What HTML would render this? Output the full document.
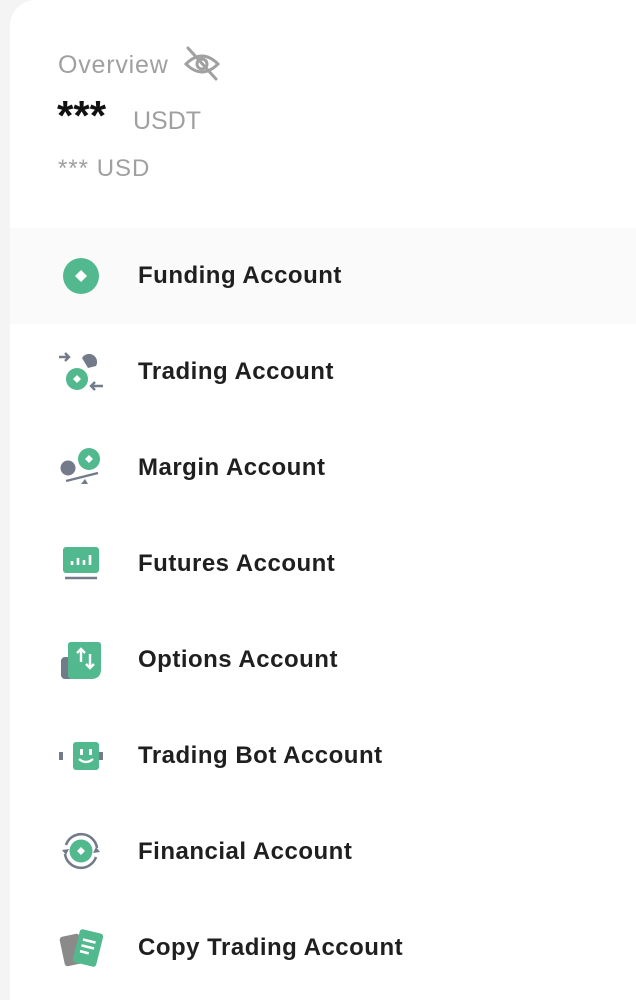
<!DOCTYPE html>
<html><head><meta charset="utf-8"><style>
html,body{margin:0;padding:0;width:636px;height:972px;overflow:hidden;background:#f4f4f4;font-family:"Liberation Sans",Roboto,sans-serif}
.card{position:absolute;left:10px;top:0;width:640px;height:1000px;background:#fff;border-top-left-radius:26px}
.t{position:absolute;white-space:nowrap}
.row{position:absolute;left:10px;width:626px;height:96px}
.row span{position:absolute;left:128px;top:34px;font-size:24px;color:#1f1f1f;font-weight:bold;letter-spacing:0.5px}
svg.i{position:absolute;left:60px;width:40px;height:40px;overflow:visible}
</style></head><body>
<div class="card"></div>
<div class="t" style="left:58px;top:51px;font-size:25px;color:#a0a0a0;letter-spacing:0.8px">Overview</div>
<svg style="position:absolute;left:183px;top:46px;overflow:visible" width="38" height="36" viewBox="0 0 38 36" fill="none" stroke="#a0a0a0" stroke-width="3" stroke-linecap="round"><path d="M3 18 Q19 2 35 18 Q19 34 3 18Z"/><circle cx="19" cy="18" r="5"/><path d="M5 2 L33 33"/></svg>
<div class="t" style="left:57px;top:92px;font-size:42px;font-weight:bold;color:#111">***</div>
<div class="t" style="left:133px;top:107px;font-size:25px;color:#a0a0a0">USDT</div>
<div class="t" style="left:58px;top:155px;font-size:24px;color:#a0a0a0;letter-spacing:1px">*** USD</div>

<div class="row" style="top:228px;background:#fafafa"><span>Funding Account</span></div>
<div class="row" style="top:324px"><span>Trading Account</span></div>
<div class="row" style="top:420px"><span>Margin Account</span></div>
<div class="row" style="top:516px"><span>Futures Account</span></div>
<div class="row" style="top:612px"><span>Options Account</span></div>
<div class="row" style="top:708px"><span>Trading Bot Account</span></div>
<div class="row" style="top:804px"><span>Financial Account</span></div>
<div class="row" style="top:900px"><span>Copy Trading Account</span></div>

<svg class="i" style="top:256px" viewBox="0 0 40 40"><circle cx="21" cy="20" r="18" fill="#52b88e"/><path d="M21 14 L27 20 L21 26 L15 20Z" fill="#fff"/></svg>
<svg class="i" style="top:352px" viewBox="0 0 40 40"><path d="M22 6 A8 8 0 0 1 36 14 L28 16Z" fill="#737b8a"/><circle cx="17" cy="27" r="11" fill="#52b88e"/><path d="M17 23 L21 27 L17 31 L13 27Z" fill="#fff"/><path d="M-1 5 H9 M5 1 L9 5 L5 9" stroke="#737b8a" stroke-width="2.4" fill="none"/><path d="M43 34 H31 M35 30 L31 34 L35 38" stroke="#737b8a" stroke-width="2.4" fill="none"/></svg>
<svg class="i" style="top:448px" viewBox="0 0 40 40"><circle cx="8" cy="20" r="7.5" fill="#737b8a"/><circle cx="29" cy="11" r="11" fill="#52b88e"/><path d="M29 7 L33 11 L29 15 L25 11Z" fill="#fff"/><path d="M6 33 L38 25" stroke="#737b8a" stroke-width="2.4"/><path d="M21 36 L25 31 L28 36Z" fill="#737b8a"/></svg>
<svg class="i" style="top:544px" viewBox="0 0 40 40"><rect x="3" y="3" width="36" height="26" rx="3" fill="#52b88e"/><path d="M12 21 V17 M18 21 V14 M24 21 V16 M30 21 V11" stroke="#fff" stroke-width="2.6"/><path d="M5 34 H37" stroke="#737b8a" stroke-width="2.4"/></svg>
<svg class="i" style="top:640px" viewBox="0 0 40 40"><rect x="1" y="17" width="14" height="22" rx="4" fill="#737b8a"/><path d="M11 2 Q8 2 8 5 V35 Q8 39 12 39 H31 Q41 39 41 29 V5 Q41 2 38 2 H11Z" fill="#52b88e"/><path d="M21 22 V9 M17 13 L21 9 L25 13 M30 14 V28 M26 24 L30 28 L34 24" stroke="#fff" stroke-width="2.4" fill="none"/></svg>
<svg class="i" style="top:736px" viewBox="0 0 40 40"><rect x="-1" y="16" width="4" height="8" fill="#737b8a"/><rect x="39" y="16" width="4" height="8" fill="#737b8a"/><rect x="13" y="6" width="26" height="28" rx="3" fill="#52b88e"/><rect x="20" y="13" width="3" height="6" fill="#fff"/><rect x="29" y="13" width="3" height="6" fill="#fff"/><path d="M19 23 Q26 29 33 23" stroke="#fff" stroke-width="2.4" fill="none"/></svg>
<svg class="i" style="top:831px" viewBox="0 0 40 40"><path d="M6 14 A16 16 0 0 1 37 17" stroke="#737b8a" stroke-width="2.6" fill="none"/><path d="M36 26 A16 16 0 0 1 5 23" stroke="#737b8a" stroke-width="2.6" fill="none"/><path d="M2 19 L6 24 L9 18Z M40 21 L36 16 L33 22Z" fill="#737b8a"/><circle cx="21" cy="20" r="11.5" fill="#52b88e"/><path d="M21 16 L25 20 L21 24 L17 20Z" fill="#fff"/></svg>
<svg class="i" style="top:928px" viewBox="0 0 40 40"><rect x="2" y="7" width="20" height="30" rx="3" fill="#8a8a8a" transform="rotate(-12 12 22)"/><g transform="rotate(14 28 20)"><rect x="16" y="3" width="24" height="34" rx="3" fill="#52b88e"/><path d="M21 13 H34 M21 19 H34 M21 25 H30" stroke="#fff" stroke-width="2.6"/></g></svg>
</body></html>
